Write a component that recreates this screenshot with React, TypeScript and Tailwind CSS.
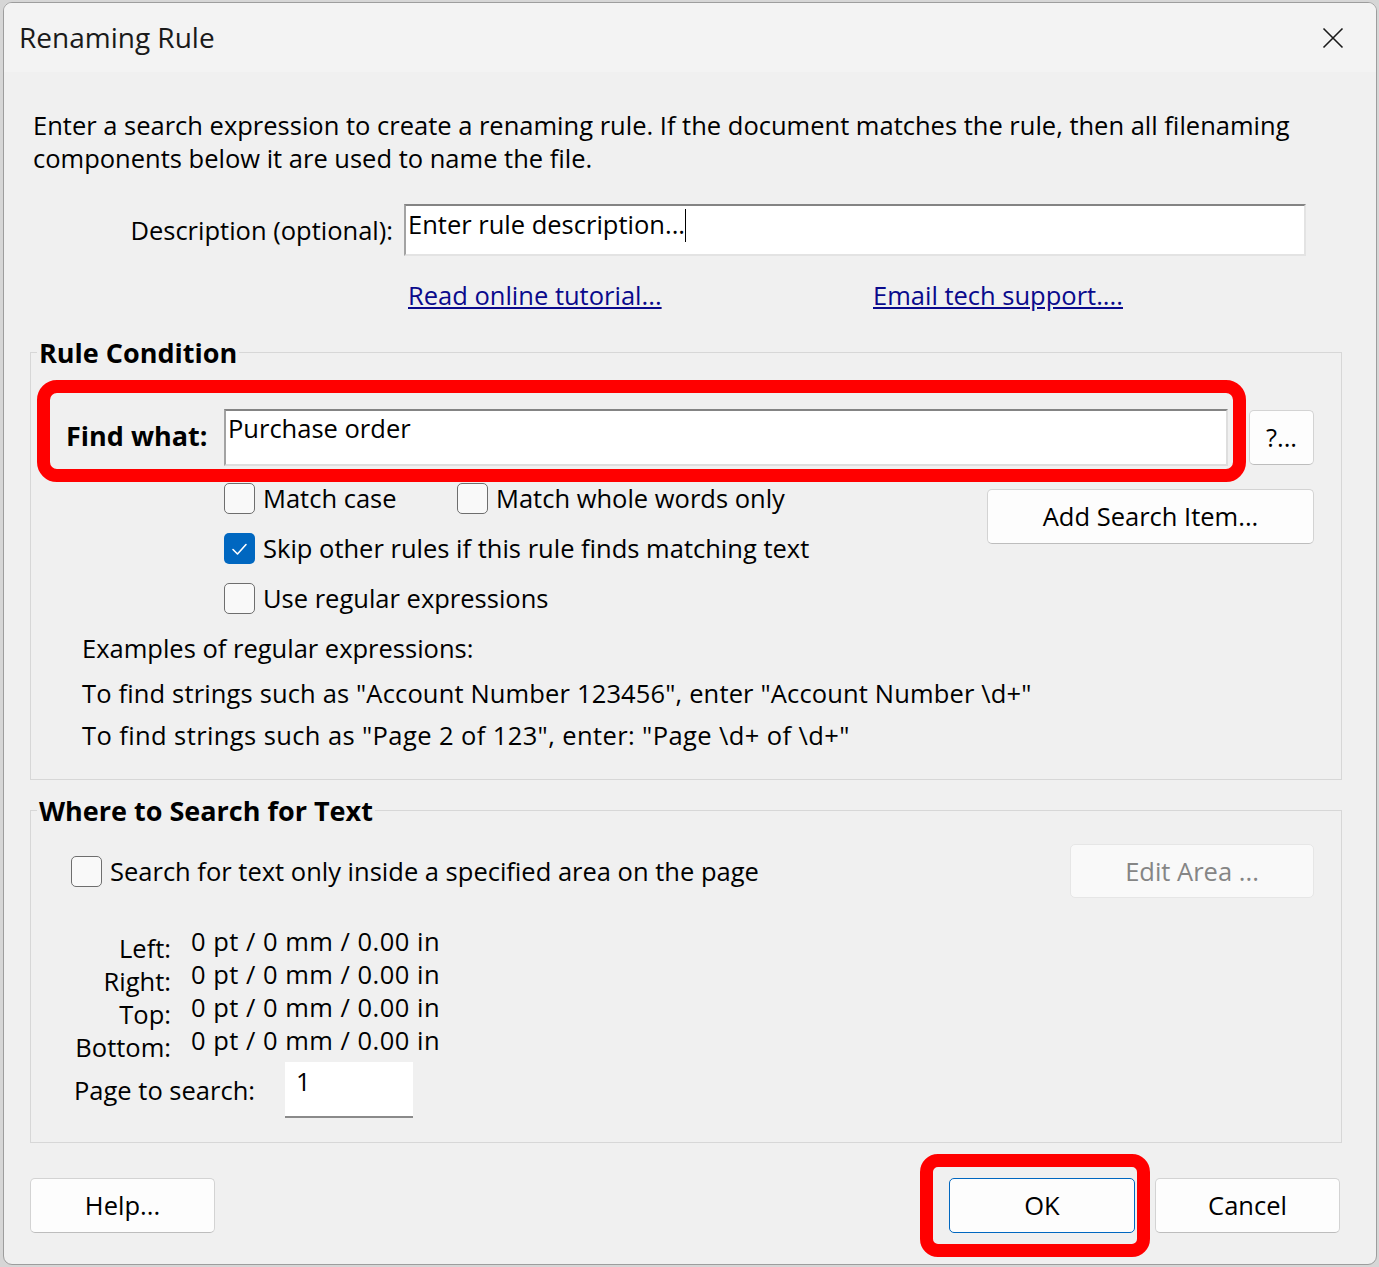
import React from 'react';

const Check = ({ checked }: { checked?: boolean }) =>
  checked ? (
    <span className="flex h-[31px] w-[31px] shrink-0 items-center justify-center rounded-[5px] bg-[#0067c0]">
      <svg width="31" height="31" viewBox="0 0 31 31">
        <path d="M9 16.5 L13.5 21 L22 11.5" fill="none" stroke="white" strokeWidth="1.6" strokeLinecap="round" strokeLinejoin="round" />
      </svg>
    </span>
  ) : (
    <span className="h-[31px] w-[31px] shrink-0 rounded-[5px] border border-[#6e6e6e] bg-[#f9f9f9]" />
  );

const btn =
  'flex items-center justify-center rounded-[5px] border border-[#d3d3d3] border-b-[#bdbdbd] bg-[#fdfdfd] text-black';

const coords = ['Left:', 'Right:', 'Top:', 'Bottom:'];

export default function App() {
  return (
    <div className="h-[1267px] w-[1379px] overflow-hidden bg-[#d6d6d6] pl-[3px] pt-[2px] font-['Open_Sans',sans-serif] text-[25.5px] leading-[33px] text-black">
      <div className="flex h-[1263px] w-[1374px] flex-col overflow-hidden rounded-[9px] border border-[#9d9d9d] bg-[#f0f0f0]">
        {/* title bar */}
        <div className="flex h-[69px] shrink-0 items-center justify-between bg-[#f3f3f3] pl-[15px] pr-[32px]">
          <span className="text-[28px] text-[#1a1a1a]">Renaming Rule</span>
          <svg width="22" height="22" viewBox="0 0 22 22">
            <path d="M1.5 1.5 L20.5 20.5 M20.5 1.5 L1.5 20.5" stroke="#1a1a1a" strokeWidth="1.6" />
          </svg>
        </div>

        <div className="mt-[37px] whitespace-nowrap pl-[29px]">
          Enter a search expression to create a renaming rule. If the document matches the rule, then all filenaming
          <br />
          components below it are used to name the file.
        </div>

        <div className="mt-[29px] flex items-center">
          <span className="w-[389px] text-right">Description (optional):</span>
          <div className="ml-[11px] flex h-[52px] w-[902px] items-start border-2 border-[#e3e3e3] border-l-[#a3a3a3] border-t-[#848484] bg-white pl-[2px] pt-[2px]">
            <span>Enter rule description...</span>
            <span className="mt-[1px] h-[33px] w-px bg-black" />
          </div>
        </div>

        <div className="mt-[23px] flex pl-[404px] text-[#0a0a8c]">
          <span className="w-[465px] underline">Read online tutorial...</span>
          <span className="underline">Email tech support....</span>
        </div>

        {/* Rule Condition */}
        <fieldset className="ml-[26px] mt-[24px] w-[1312px] border border-[#d7d7d7] pb-[27px]">
          <legend className="ml-[6px] px-[2px] text-[27px] font-bold">Rule Condition</legend>
          <div className="mt-[11px] flex items-start">
            <div className="ml-[6px] flex h-[102px] w-[1209px] items-start rounded-[20px] border-[13px] border-[#ff0000] pl-[16px] pt-[16px]">
              <span className="mt-[10px] w-[158px] text-[27px] font-bold">Find what:</span>
              <div className="h-[57px] w-[1004px] border-2 border-[#dedede] border-l-[#a3a3a3] border-t-[#848484] bg-white pl-[2px] pt-[1px]">
                Purchase order
              </div>
            </div>
            <div className={`${btn} ml-[3px] mt-[30px] h-[55px] w-[65px]`}>?...</div>
          </div>

          <div className="flex justify-between pl-[193px] pr-[27px]">
            <div className="flex flex-col gap-[17px]">
              <div className="flex h-[33px] items-center">
                <label className="flex w-[233px] items-center gap-[8px]">
                  <Check />
                  Match case
                </label>
                <label className="flex items-center gap-[8px]">
                  <Check />
                  Match whole words only
                </label>
              </div>
              <label className="flex h-[33px] items-center gap-[8px]">
                <Check checked />
                Skip other rules if this rule finds matching text
              </label>
              <label className="flex h-[33px] items-center gap-[8px]">
                <Check />
                Use regular expressions
              </label>
            </div>
            <div className={`${btn} mt-[7px] h-[55px] w-[327px]`}>Add Search Item...</div>
          </div>

          <div className="mt-[17px] whitespace-nowrap pl-[51px]">
            <div>Examples of regular expressions:</div>
            <div className="mt-[12px] tracking-[0.15px]">To find strings such as "Account Number 123456", enter "Account Number \d+"</div>
            <div className="mt-[9px] tracking-[0.4px]">To find strings such as "Page 2 of 123", enter: "Page \d+ of \d+"</div>
          </div>
        </fieldset>

        {/* Where to Search for Text */}
        <fieldset className="ml-[26px] mt-[14px] w-[1312px] border border-[#d7d7d7] pb-[24px]">
          <legend className="ml-[6px] px-[2px] text-[27px] font-bold">Where to Search for Text</legend>
          <div className="mt-[17px] flex items-center justify-between pl-[40px] pr-[27px]">
            <label className="flex items-center gap-[8px]">
              <Check />
              Search for text only inside a specified area on the page
            </label>
            <div className="flex h-[54px] w-[244px] items-center justify-center rounded-[5px] border border-[#e6e6e6] bg-[#f9f9f9] text-[#858585]">
              Edit Area ...
            </div>
          </div>

          <div className="mt-[27px] grid grid-cols-[140px_auto] gap-x-[20px]">
            {coords.map((c) => (
              <React.Fragment key={c}>
                <span className="translate-y-[7px] text-right">{c}</span>
                <span className="tracking-[0.5px]">0 pt / 0 mm / 0.00 in</span>
              </React.Fragment>
            ))}
          </div>

          <div className="mt-[5px] flex items-center pl-[43px]">
            <span className="w-[211px]">Page to search:</span>
            <div className="h-[56px] w-[128px] border-b-2 border-[#8a8a8a] bg-white pl-[11px] pt-[3px]">1</div>
          </div>
        </fieldset>

        {/* bottom buttons */}
        <div className="mt-[11px] flex items-start">
          <div className={`${btn} ml-[26px] mt-[24px] h-[55px] w-[185px]`}>Help...</div>
          <div className="ml-[705px] h-[103px] w-[230px] rounded-[18px] border-[13px] border-[#ff0000] pl-[16px] pt-[11px]">
            <div className="flex h-[55px] w-[186px] items-center justify-center rounded-[5px] border border-[#0067c0] bg-[#fdfdfd]">
              OK
            </div>
          </div>
          <div className={`${btn} ml-[5px] mt-[24px] h-[55px] w-[185px]`}>Cancel</div>
        </div>
      </div>
    </div>
  );
}
